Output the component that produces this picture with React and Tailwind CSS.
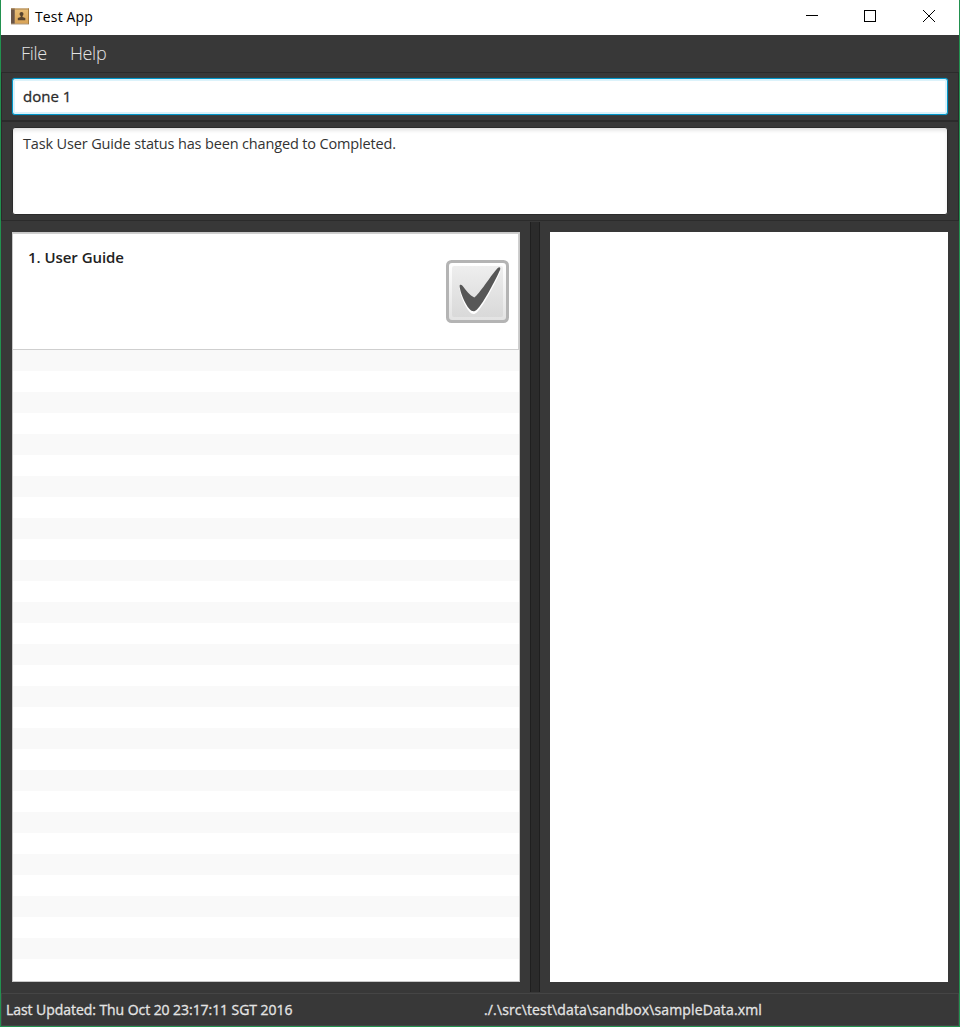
import React from 'react';

function AppIcon() {
  return (
    <svg className="h-[18px] w-[18px]" viewBox="0 0 18 18">
      <defs>
        <linearGradient id="cover" x1="0" y1="0" x2="0" y2="1">
          <stop offset="0" stopColor="#e9bf78" />
          <stop offset="1" stopColor="#d8a255" />
        </linearGradient>
      </defs>
      <path d="M0 .5h18v15.500H0z" fill="url(#cover)" />
      <path d="M0 .5h3v15.500H0z" fill="#6b5648" />
      <path d="M3 .5h1v15.500H3z" fill="#8b6f54" />
      <path d="M0 .5h18v1H0z" fill="#a98556" />
      <path d="M0 15.500h18v1H0z" fill="#b09a80" />
      <path d="M17 .5h1v15.500h-1z" fill="#a87c3e" />
      <circle cx="10.500" cy="6" r="2" fill="#57442f" />
      <path d="M9.700 7h1.800v2l2.800 1v2.200H6.800V10l2.900-1z" fill="#57442f" />
    </svg>
  );
}

function TitleBar() {
  return (
    <header className="flex h-[35px] shrink-0 items-center justify-between bg-white pl-[10px]">
      <div className="flex items-center gap-[6px] pb-[2px]">
        <AppIcon />
        <span className="text-[14px] leading-5 tracking-[0.15px] text-black">Test App</span>
      </div>
      <div className="flex pb-[3px] pr-[24px]">
        <svg className="mr-[46px] h-3 w-3" viewBox="0 0 12 12" shapeRendering="crispEdges">
          <path d="M0 5h12v1H0z" />
        </svg>
        <svg className="mr-[47px] h-3 w-3" viewBox="0 0 12 12" shapeRendering="crispEdges">
          <path d="M.5.5h11v11H.5z" fill="none" stroke="#000" />
        </svg>
        <svg className="h-3 w-3" viewBox="0 0 12 12">
          <path d="M0 0l12 12M12 0L0 12" fill="none" stroke="#000" />
        </svg>
      </div>
    </header>
  );
}

function MenuBar() {
  return (
    <nav className="flex h-[37px] shrink-0 items-center gap-[23px] pb-[2px] pl-5 text-[18px] font-light leading-6 text-[#e4e4e4]">
      <span className="tracking-[-0.3px]">File</span>
      <span className="tracking-[-0.3px]">Help</span>
    </nav>
  );
}

const CHECK_MARK =
  'M13.600 26C13.600 24.300 15.300 24.300 16.500 25.800C19.500 29.500 24 36 28.300 37.400C33 35 45 15 52 7.800C53.800 6.300 54.900 7.800 54 10C50 19 38 42.500 31 49.500C28.500 52 26 51.800 23.500 49C18.500 43.500 14 31.500 13.600 26z';

function CheckedBox() {
  return (
    <svg className="h-[63px] w-[63px]" viewBox="0 0 63 63">
      <defs>
        <linearGradient id="face" x1="0" y1="0" x2="0" y2="1">
          <stop offset="0" stopColor="#eeeeee" />
          <stop offset="1" stopColor="#d9d9d9" />
        </linearGradient>
        <linearGradient id="rim" x1="0" y1="0" x2="0" y2="1">
          <stop offset="0" stopColor="#ffffff" />
          <stop offset="1" stopColor="#e3e3e3" />
        </linearGradient>
      </defs>
      <rect width="63" height="63" rx="5.500" fill="#b4b4b4" />
      <rect x="3" y="3" width="57" height="57" rx="3" fill="url(#rim)" />
      <rect x="6" y="6" width="51" height="51" rx="2" fill="url(#face)" />
      <path transform="translate(0 2.800)" d={CHECK_MARK} fill="#fff" />
      <path d={CHECK_MARK} fill="#575757" />
    </svg>
  );
}

function TaskList() {
  return (
    <section className="flex w-[508px] shrink-0 flex-col overflow-hidden border border-[#c8c8c8] bg-white">
      <div className="flex h-[117px] shrink-0 justify-between border-b border-r border-t border-[#cfcfcf] pl-[15px] pr-[9px]">
        <h2 className="pt-[12px] text-[15px] font-semibold leading-[22px] tracking-[-0.05px] text-[#222]">1. User Guide</h2>
        <div className="pt-[26px]">
          <CheckedBox />
        </div>
      </div>
      {Array.from({ length: 29 }, (_, i) => (
        <div key={i} className="h-[21px] shrink-0 odd:bg-white even:bg-[#f9f9f9]" />
      ))}
    </section>
  );
}

export default function App() {
  return (
    <div className="flex h-[1027px] w-[960px] flex-col border-x border-b border-[#22914f] bg-[#383838] font-['Open_Sans','Noto_Sans',sans-serif]">
      <TitleBar />
      <MenuBar />
      <div className="h-[49px] shrink-0 border border-[#2b2b2b] px-[10px] pt-[5px]">
        <div className="flex h-[37px] items-center rounded-[3px] border border-[#0096c9] bg-white pb-[2px] pl-[10px] text-[15px] leading-5 text-[#2c2c2c] shadow-[inset_0_0_0_2px_#dcf2fa,0_0_1px_#0096c9] [-webkit-text-stroke:0.3px_#2c2c2c]">
          done 1
        </div>
      </div>
      <div className="h-[100px] shrink-0 border border-[#2b2b2b] px-[10px] pt-[5px]">
        <div className="h-[88px] rounded-[3px] border border-[#2b2b2b] bg-white pl-[10px] pt-[6px] text-[14.5px] leading-5 tracking-[-0.15px] text-[#333] shadow-[inset_0_3px_4px_-1px_#dddddd]">
          Task User Guide status has been changed to Completed.
        </div>
      </div>
      <main className="flex h-[772px] shrink-0 pb-px pl-[11px] pt-px">
        <div className="flex py-[10px]">
          <TaskList />
        </div>
        <div className="ml-[10px] w-[10px] border-x border-[#1f1f1f] bg-[#2b2b2b]" />
        <div className="flex py-[10px] pl-[10px]">
          <section className="w-[398px] bg-white" />
        </div>
      </main>
      <footer className="flex h-[33px] shrink-0 items-center border border-[#454545] pl-1 text-[14px] leading-5 text-[#e4e4e4] [-webkit-text-stroke:0.3px_#e4e4e4]">
        <span className="w-[478px] tracking-[-0.06px]">Last Updated: Thu Oct 20 23:17:11 SGT 2016</span>
        <span className="tracking-[0.14px]">./.\src\test\data\sandbox\sampleData.xml</span>
      </footer>
    </div>
  );
}
